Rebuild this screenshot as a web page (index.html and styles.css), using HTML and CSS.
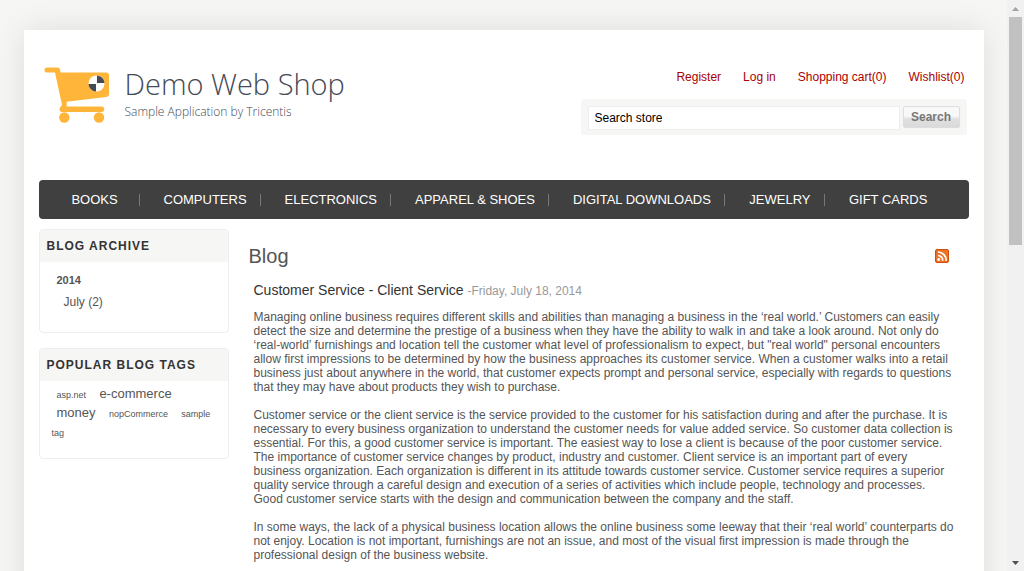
FILE: index.html
```html
<!DOCTYPE html>
<html lang="en">
<head>
<meta charset="utf-8">
<title>Demo Web Shop. Blog</title>
<link rel="stylesheet" href="styles.css">
</head>
<body>
<div class="viewport">
<div class="page">
  <header class="header">
    <a class="logo" href="#">
      <svg class="cart" width="66" height="58" viewBox="0 0 66 58" aria-hidden="true">
        <g fill="#ffb53a">
          <path d="M3 .5H13.500Q15.500 .5 16 2.500L16.600 5.500H62Q65 5.500 65 8.500V27Q65 29.700 62 30L22.700 34.700V39.500H57.500A2.600 2.600 0 0 1 57.500 45H17.500Q14.500 43.500 16 40.500L18 38L11 5.500H3A2.500 2.500 0 0 1 3 .5Z"/>
          <circle cx="20.300" cy="50.500" r="5.200"/><circle cx="55" cy="50.500" r="5.200"/>
        </g>
        <circle cx="52.500" cy="16.500" r="8" fill="#fff"/>
        <path d="M53 16V8.500A8 8 0 0 1 60.500 16ZM52 17V24.500A8 8 0 0 1 44.500 17Z" fill="#444a57"/>
      </svg>
      <span class="logo-text"><span class="logo-name">Demo Web Shop</span><span class="logo-tag">Sample Application by Tricentis</span></span>
    </a>
    <div class="tools">
      <nav class="account" aria-label="Account">
        <a href="#">Register</a><a href="#">Log in</a><a href="#">Shopping cart(0)</a><a href="#">Wishlist(0)</a>
      </nav>
      <form class="search">
        <input class="search-box" type="text" value="Search store" aria-label="Search store">
        <button class="search-button" type="button">Search</button>
      </form>
    </div>
  </header>
  <nav class="menu" aria-label="Categories">
    <a href="#">Books</a><a href="#">Computers</a><a href="#">Electronics</a><a href="#">Apparel &amp; Shoes</a><a href="#">Digital downloads</a><a href="#">Jewelry</a><a href="#">Gift Cards</a>
  </nav>
  <div class="columns">
    <aside class="side">
      <section class="block">
        <h2 class="block-title">Blog archive</h2>
        <div class="archive">
          <strong class="year">2014</strong>
          <a class="month" href="#">July (2)</a>
        </div>
      </section>
      <section class="block">
        <h2 class="block-title">Popular blog tags</h2>
        <div class="tags"><a href="#">asp.net</a> <a class="big" href="#">e-commerce</a> <a class="big" href="#">money</a> <a href="#">nopCommerce</a> <a href="#">sample tag</a></div>
      </section>
    </aside>
    <main class="main">
      <div class="title-row">
        <h1 class="title">Blog</h1>
        <a class="rss" href="#" aria-label="RSS feed">
          <svg width="14" height="14" viewBox="0 0 14 14"><rect x=".5" y=".5" width="13" height="13" rx="1.500" fill="#ec7326" stroke="#d34d0c"/><circle cx="3.700" cy="10.500" r="1.400" fill="#fff"/><path d="M3 6.500A5 5 0 0 1 7.700 11.800M3 3A8.500 8.500 0 0 1 11.200 11.800" fill="none" stroke="#fff" stroke-width="1.700"/></svg>
        </a>
      </div>
      <article class="post">
        <h2 class="post-head"><a href="#">Customer Service - Client Service</a> <span class="date">-Friday, July 18, 2014</span></h2>
        <p>Managing online business requires different skills and abilities than managing a business in the ‘real world.’ Customers can easily detect the size and determine the prestige of a business when they have the ability to walk in and take a look around. Not only do ‘real-world’ furnishings and location tell the customer what level of professionalism to expect, but "real world" personal encounters allow first impressions to be determined by how the business approaches its customer service. When a customer walks into a retail business just about anywhere in the world, that customer expects prompt and personal service, especially with regards to questions that they may have about products they wish to purchase.</p>
        <p>Customer service or the client service is the service provided to the customer for his satisfaction during and after the purchase. It is necessary to every business organization to understand the customer needs for value added service. So customer data collection is essential. For this, a good customer service is important. The easiest way to lose a client is because of the poor customer service. The importance of customer service changes by product, industry and customer. Client service is an important part of every business organization. Each organization is different in its attitude towards customer service. Customer service requires a superior quality service through a careful design and execution of a series of activities which include people, technology and processes. Good customer service starts with the design and communication between the company and the staff.</p>
        <p>In some ways, the lack of a physical business location allows the online business some leeway that their ‘real world’ counterparts do not enjoy. Location is not important, furnishings are not an issue, and most of the visual first impression is made through the professional design of the business website.</p>
      </article>
    </main>
  </div>
</div>
</div>
<div class="scrollbar" aria-hidden="true">
  <svg width="17" height="17" viewBox="0 0 17 17"><path d="M5 11H12L8.500 7Z" fill="#a3a3a3"/></svg>
  <div class="thumb"></div>
  <svg class="down" width="17" height="17" viewBox="0 0 17 17"><path d="M5 7H12L8.500 11Z" fill="#505050"/></svg>
</div>
</body>
</html>
```
FILE: styles.css
```css
* { box-sizing: border-box; }
body {
  display: flex;
  height: 100vh;
  margin: 0;
  overflow: hidden;
  background: #f6f6f4;
  color: #555;
  font: 12px/14px "Liberation Sans", Arial, sans-serif;
}
a { color: inherit; text-decoration: none; }
h1, h2, p { margin: 0; font-weight: normal; }
.viewport { flex: 1; min-width: 0; overflow: hidden; }
.page {
  max-width: 960px;
  min-height: 100vh;
  margin: 30px auto;
  padding: 0 15px 30px;
  background: #fff;
  box-shadow: 0 0 30px rgba(0, 0, 0, 0.1);
}
.header { display: flex; justify-content: space-between; height: 150px; padding: 37px 2px 0 5px; }
.logo { display: flex; align-items: flex-start; gap: 15px; }
.logo-text { display: flex; flex-direction: column; font-family: "Open Sans", sans-serif; font-weight: 300; }
.logo-name { color: #444a57; font-size: 29px; line-height: 33px; }
.logo-tag { color: #444a57; font-size: 12px; line-height: 24px; }
.tools { flex: 0 1 386px; }
.account { display: flex; justify-content: flex-end; gap: 22px; padding: 3px 2px 15px; color: #a00; }
.search { display: flex; align-items: flex-start; gap: 3px; padding: 7px 7px 5px; border-radius: 3px; background: #f6f6f4; }
.search-box {
  flex: 1;
  min-width: 0;
  height: 24px;
  padding: 0 6px;
  border: 1px solid #eee;
  background: #fff;
  color: #000;
  font: inherit;
}
.search-button {
  width: 57px;
  height: 22px;
  padding: 0;
  border: 1px solid #ddd;
  border-radius: 2px;
  background: linear-gradient(#f8f8f8 45%, #e0e0e0 60%, #dadada);
  color: #777;
  font: bold 12px/18px "Liberation Sans", Arial, sans-serif;
}
.menu { display: flex; height: 39px; align-items: center; border-radius: 4px; background: #404040; color: #fff; font-size: 13px; text-transform: uppercase; }
.menu a { min-width: 100px; padding: 0 13px 0 24px; border-left: 1px solid #777; line-height: 12px; text-align: center; white-space: nowrap; }
.menu a:first-child { border-color: transparent; }
.columns { display: flex; gap: 20px; padding-top: 10px; }
.side { flex: 0 0 190px; }
.block { margin-bottom: 15px; border: 1px solid #eee; border-radius: 4px; overflow: hidden; }
.block-title { padding: 9px 7px; background: #f6f6f4; color: #333; font-size: 12px; font-weight: bold; letter-spacing: 1px; text-transform: uppercase; }
.archive { display: flex; flex-direction: column; gap: 8px; padding: 11px 17px 23px; }
.year { font-size: 11px; }
.month { padding-left: 7px; }
.tags { padding: 4px 12px 16px; line-height: 19px; }
.tags a { padding: 0 5px; font-size: 9px; line-height: 12px; }
.tags .big { font-size: 13px; }
.main { flex: 1; min-width: 0; }
.title-row { display: flex; justify-content: space-between; align-items: center; padding: 14px 20px 11px 0; }
.title { font-size: 20px; line-height: 26px; }
.rss { display: flex; }
.post { padding: 0 15px 0 5px; }
.post-head { margin-bottom: 9px; color: #333; font-size: 14px; line-height: 20px; }
.date { color: #999; font-size: 12px; }
.post p { margin-bottom: 14px; }
.scrollbar { display: flex; flex: 0 0 17px; flex-direction: column; background: #f1f1f1; }
.thumb { height: 40%; margin: 0 2px; background: #c1c1c1; }
.down { margin-top: auto; }
```
